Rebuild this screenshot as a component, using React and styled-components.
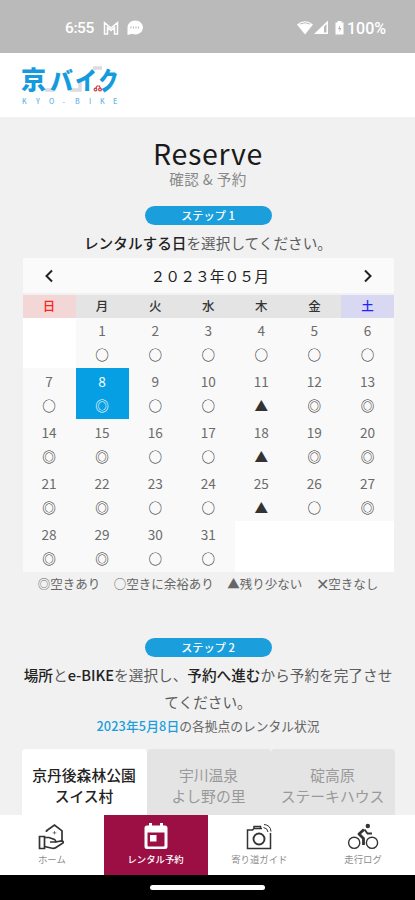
import React from "react";
import styled, { createGlobalStyle } from "styled-components";

const GlobalStyle = createGlobalStyle`
  body {
    margin: 0;
    background-color: #f1f1f1;
    font-family: "Noto Sans CJK JP", "Noto Sans", sans-serif;
    color: #222;
  }
  * {
    box-sizing: border-box;
  }
`

const MainContainer = styled.div`
  display: flex;
  flex-direction: column;
  width: 415px;
  height: 900px;
  overflow: hidden;
`

const StatusBar = styled.div`
  display: flex;
  justify-content: space-between;
  align-items: center;
  flex: none;
  height: 53px;
  padding: 3px 29px 0 65px;
  background-color: #bababa;
  color: white;
  font-family: Roboto, sans-serif;
  font-size: 16px;
  font-weight: 500;
`

const StatusGroup = styled.div`
  display: flex;
  align-items: center;
  height: 20px;
`

const Relogio = styled.span`
  width: 38px;
  font-size: 15.5px;
  letter-spacing: -0.4px;
`

const Header = styled.header`
  flex: none;
  height: 64px;
  padding-left: 14px;
  background-color: white;
`

const Conteudo = styled.main`
  flex: 1;
  min-height: 0;
  overflow: hidden;
  padding: 20px 20.5px 0 21.5px;
  text-align: center;
`

const Titulo = styled.h1`
  margin: 0;
  font-size: 28.5px;
  font-weight: 400;
  line-height: 31px;
  letter-spacing: 0.7px;
  color: #1a1a1a;
`

const Subtitulo = styled.div`
  height: 38px;
  font-size: 14.6px;
  line-height: 22px;
  letter-spacing: 0.4px;
  color: #888;
`

const Etapa = styled.div`
  width: 127px;
  height: 19px;
  margin: 0 auto;
  border-radius: 10px;
  background-color: #1a9fdc;
  color: white;
  font-size: 11.2px;
  font-weight: 500;
  line-height: 19px;
`

const Instrucao = styled.p`
  margin: 0 -4px;
  padding-top: 4px;
  font-size: 14.65px;
  line-height: 27px;
  color: #5c5c5c;
  b {
    font-weight: 500;
    color: #222;
  }
`

const DataEscolhida = styled.p`
  margin: 0;
  font-size: 12.75px;
  line-height: 22px;
  color: #666;
  span {
    color: #1a9fdc;
    font-weight: 500;
    letter-spacing: 0.1px;
  }
`

const Calendario = styled.div`
  margin: 2px 0 0 1px;
  width: 371.5px;
`

const CalendarioTopo = styled.div`
  display: flex;
  justify-content: space-between;
  align-items: center;
  height: 35px;
  margin-bottom: 2px;
  padding: 0 20px 0 21px;
  background-color: #fafafa;
  font-size: 14.8px;
`

const MesAtual = styled.span`
  padding-left: 2px;
`

const BotaoMes = styled.button`
  display: flex;
  padding: 0;
  border: none;
  background: none;
  color: #222;
`

const Semana = styled.div`
  display: grid;
  grid-template-columns: repeat(7, 1fr);
`

const coresSemana = {
  dom: ["#f3d6d6", "#f22"],
  sab: ["#d9d8f2", "#22f"],
}

const DiaSemana = styled.div`
  height: 22.5px;
  font-size: 12.5px;
  font-weight: 500;
  line-height: 22px;
  background-color: ${(p) => (coresSemana[p.$tipo] || ["#e4e4e4"])[0]};
  color: ${(p) => (coresSemana[p.$tipo] || ["", "#333"])[1]};
`

const Dia = styled.div`
  height: 50.9px;
  padding-top: 1.5px;
  background-color: ${(p) => (p.$vazio ? "white" : p.$ativo ? "#069fe4" : "#f9f9f9")};
  color: ${(p) => (p.$ativo ? "white" : "#6b6b6b")};
`

const Numero = styled.div`
  font-size: 13.6px;
  line-height: 22px;
`

const Situacao = styled.div`
  font-size: 13.6px;
  font-weight: 500;
  line-height: 27px;
  color: ${(p) => (p.$ativo ? "white" : "#333")};
`

const Legenda = styled.div`
  display: flex;
  justify-content: center;
  gap: 13.5px;
  height: 66px;
  font-size: 12.5px;
  line-height: 24px;
  color: #666;
  white-space: nowrap;
`

const Cheio = styled.span`
  display: inline-block;
  width: 12.5px;
  font-size: 16px;
  line-height: 20px;
  vertical-align: -1px;
`

const Abas = styled.div`
  display: grid;
  grid-template-columns: 125px 124px 124px;
  margin-top: 12px;
`

const Aba = styled.div`
  height: 80px;
  padding-top: 15px;
  border-radius: 4px 4px 0 0;
  background-color: ${(p) => (p.$ativa ? "white" : "#e4e4e4")};
  color: ${(p) => (p.$ativa ? "#222" : "#999")};
  font-size: 14.8px;
  font-weight: ${(p) => (p.$ativa ? 500 : 400)};
  line-height: 21.5px;
  white-space: pre-line;
`

const Menu = styled.nav`
  display: grid;
  grid-template-columns: repeat(4, 1fr);
  flex: none;
  height: 60px;
  background-color: white;
`

const MenuItem = styled.div`
  display: flex;
  flex-direction: column;
  align-items: center;
  padding-top: 7px;
  background-color: ${(p) => (p.$ativo ? "#9b0f45" : "white")};
  color: ${(p) => (p.$ativo ? "white" : "#333")};
`

const MenuTexto = styled.span`
  font-size: 9.4px;
  line-height: 14px;
  color: ${(p) => (p.$ativo ? "white" : "#8c8c8c")};
  font-weight: ${(p) => (p.$ativo ? 500 : 400)};
`

const Rodape = styled.div`
  display: flex;
  justify-content: center;
  flex: none;
  height: 25px;
  padding-top: 10px;
  background-color: black;
`

const Indicador = styled.div`
  width: 115px;
  height: 5px;
  border-radius: 3px;
  background-color: white;
`

const Logo = () => (
  <svg width="120" height="60" viewBox="14 53 120 60">
    <g fill="none" stroke="#dcdce0" strokeWidth="3.5">
      <path d="M45 90H54M70 90H80V79M93 68H102" />
    </g>
    <g fill="#149bdd" fontSize="25" fontWeight="900">
      <text x="21" y="89" textLength="25" lengthAdjust="spacingAndGlyphs">京</text>
      <text x="50" y="89.5" textLength="23" lengthAdjust="spacingAndGlyphs">バ</text>
      <text x="75" y="89.5" textLength="22" lengthAdjust="spacingAndGlyphs">イ</text>
      <text x="98.5" y="89.5" textLength="20" lengthAdjust="spacingAndGlyphs">ク</text>
    </g>
    <g fill="none" stroke="#c8444c" strokeWidth="1.2">
      <circle cx="95.5" cy="89.5" r="1.4" />
      <circle cx="100" cy="89.5" r="1.4" />
      <path d="M95.5 89L97 86H99.5L100.5 89" />
    </g>
    <text
      x="22 36 49 62.5 75 89 100 113"
      y="103.5"
      fill="#6bb8e6"
      fontSize="7"
      fontWeight="500"
    >
      KYO-BIKE
    </text>
  </svg>
)

const IconesEsquerda = () => (
  <svg width="42" height="18" viewBox="0 0 42 18">
    <path d="M1.5 15V3.5L8 9L14.5 3.5V15H11.5V8.5L8 11.5L4.5 8.5V15Z" fill="none" stroke="white" strokeWidth="1.5" />
    <path d="M32 1.5a7.5 7 0 1 1-3 13.2L24.5 16V8.5A7.5 7 0 0 1 32 1.5Z" fill="white" />
    <path d="M28 7.5v2M30.5 7.5v2M33 7.5v2M35.5 7.5v2" stroke="#bababa" strokeWidth="1.1" />
  </svg>
)

const IconesDireita = () => (
  <svg width="50" height="18" viewBox="0 0 50 18">
    <path d="M0 5.5Q8 -1 16 5.5L8 15.5Z" fill="white" />
    <path d="M3 5Q8 2.5 13 5" fill="none" stroke="#bababa" strokeWidth="1" />
    <path d="M17 15H31V1.5Z" fill="white" />
    <path d="M27 7.5V13.5H29.5V5Z" fill="#bababa" />
    <path d="M40.5 2h4v1.5h2v12h-8v-12h2Z" fill="white" />
    <path d="M43 6l-2 4h1.5v3l2-4H43Z" fill="#bababa" />
  </svg>
)

const Seta = ({ d }) => (
  <svg width="12" height="14" viewBox="0 0 12 14" fill="none" stroke="currentColor" strokeWidth="2">
    <path d={d} />
  </svg>
)

const IconeCasa = () => (
  <svg width="30" height="30" viewBox="0 0 30 30" fill="none" stroke="currentColor" strokeWidth="1.7">
    <path d="M9.5 10V8.8L17.5 3L25 8.8V19" />
    <path d="M17.5 9V12.500M15.700 10.800H19.300" strokeWidth="0.6" />
    <path d="M2.5 14.5H7.5V26.5H2.5Z" />
    <path d="M7.5 15.500H12L17.500 17.5Q19 18.300 18.5 20H13" />
    <path d="M18.5 20L24.5 18.8Q27 19.2 26 21L19 25.5Q17 27 14 26L7.5 24.5" />
  </svg>
)

const IconeCalendario = () => (
  <svg width="30" height="30" viewBox="0 0 30 30">
    <path d="M6 3.5H8V1H11V3.5H19V1H22V3.5H24Q26.5 3.5 26.5 6V24.5Q26.5 27 24 27H6Q3.5 27 3.5 24.5V6Q3.5 3.5 6 3.5Z" fill="white" />
    <path d="M6.5 10.500H23.5V23.5Q23.5 24.5 22.5 24.5H7.5Q6.5 24.5 6.5 23.5Z" fill="#9b0f45" />
    <rect x="9" y="13" width="6.5" height="6.5" fill="white" />
  </svg>
)

const IconeCamera = () => (
  <svg width="30" height="30" viewBox="0 0 30 30" fill="none" stroke="currentColor" strokeWidth="1.5">
    <path d="M18 6.5H10L8.5 8H3.5V26.5H26.5V11" />
    <path d="M10 6V4.5H16.5V6.5" />
    <circle cx="15" cy="17" r="5.5" strokeWidth="1.9" />
    <path d="M20 2.5Q26.5 3 27 9.5M19.5 5.5Q23.5 6 24 10" strokeWidth="1" />
  </svg>
)

const IconeBicicleta = () => (
  <svg width="32" height="30" viewBox="0 0 32 30" fill="none" stroke="currentColor" strokeWidth="1.4">
    <circle cx="7.2" cy="20.8" r="5.6" />
    <circle cx="25" cy="20.8" r="5.6" />
    <circle cx="20.8" cy="4" r="2.2" fill="currentColor" stroke="none" />
    <path d="M17 7.5L12 12L16.500 16.5V23" strokeWidth="2.8" strokeLinejoin="round" />
    <path d="M17.5 7.5L20.5 11.5H25" strokeWidth="1.8" />
  </svg>
)

// c = bastante vaga, o = com vaga, t = poucas vagas
const simbolos = { c: "◎", o: "○", t: "▲" }
const situacoes = "oooooo" + "ocootcc" + "ccootcc" + "ccootoc" + "ccoo"

const dias = [
  null,
  ...situacoes.split("").map((s, i) => ({ numero: i + 1, simbolo: simbolos[s] })),
  null,
  null,
  null,
]

const abas = ["京丹後森林公園\nスイス村", "宇川温泉\nよし野の里", "碇高原\nステーキハウス"]

const itensMenu = [
  { texto: "ホーム", Icone: IconeCasa },
  { texto: "レンタル予約", Icone: IconeCalendario },
  { texto: "寄り道ガイド", Icone: IconeCamera },
  { texto: "走行ログ", Icone: IconeBicicleta },
]

class App extends React.Component {
  state = {
    dia: 8,
    aba: 0,
    menu: 1,
  }

  escolherDia = (dia) => {
    this.setState({ dia: dia })
  }

  renderDia = (dia, i) => {
    if (!dia) {
      return <Dia key={"vazio" + i} $vazio />
    }
    const ativo = dia.numero === this.state.dia
    return (
      <Dia key={dia.numero} $ativo={ativo} onClick={() => this.escolherDia(dia.numero)}>
        <Numero>{dia.numero}</Numero>
        <Situacao $ativo={ativo}>{dia.simbolo}</Situacao>
      </Dia>
    )
  }

  render() {
    return (
      <MainContainer>
        <GlobalStyle />
        <StatusBar>
          <StatusGroup>
            <Relogio>6:55</Relogio>
            <IconesEsquerda />
          </StatusGroup>
          <StatusGroup>
            <IconesDireita />
            <span>100%</span>
          </StatusGroup>
        </StatusBar>
        <Header>
          <Logo />
        </Header>
        <Conteudo>
          <Titulo>Reserve</Titulo>
          <Subtitulo>確認 &amp; 予約</Subtitulo>
          <Etapa>ステップ 1</Etapa>
          <Instrucao>
            <b>レンタルする日</b>を選択してください。
          </Instrucao>
          <Calendario>
            <CalendarioTopo>
              <BotaoMes><Seta d="M8 1.5L2.5 7L8 12.5" /></BotaoMes>
              <MesAtual>２０２３年０５月</MesAtual>
              <BotaoMes><Seta d="M3 1.5L8.5 7L3 12.5" /></BotaoMes>
            </CalendarioTopo>
            <Semana>
              {["日", "月", "火", "水", "木", "金", "土"].map((d, i) => (
                <DiaSemana key={d} $tipo={i === 0 ? "dom" : i === 6 ? "sab" : ""}>{d}</DiaSemana>
              ))}
              {dias.map(this.renderDia)}
            </Semana>
          </Calendario>
          <Legenda>
            <span>◎空きあり</span>
            <span>○空きに余裕あり</span>
            <span>▲残り少ない</span>
            <span><Cheio>✕</Cheio>空きなし</span>
          </Legenda>
          <Etapa>ステップ 2</Etapa>
          <Instrucao>
            <b>場所</b>と<b>e-BIKE</b>を選択し、<b>予約へ進む</b>から予約を完了させてください。
          </Instrucao>
          <DataEscolhida>
            <span>2023年5月{this.state.dia}日</span>の各拠点のレンタル状況
          </DataEscolhida>
          <Abas>
            {abas.map((aba, i) => (
              <Aba key={aba} $ativa={i === this.state.aba} onClick={() => this.setState({ aba: i })}>{aba}</Aba>
            ))}
          </Abas>
        </Conteudo>
        <Menu>
          {itensMenu.map(({ texto, Icone }, i) => (
            <MenuItem key={texto} $ativo={i === this.state.menu}>
              <Icone />
              <MenuTexto $ativo={i === this.state.menu}>{texto}</MenuTexto>
            </MenuItem>
          ))}
        </Menu>
        <Rodape>
          <Indicador />
        </Rodape>
      </MainContainer>
    )
  }
}

export default App;
